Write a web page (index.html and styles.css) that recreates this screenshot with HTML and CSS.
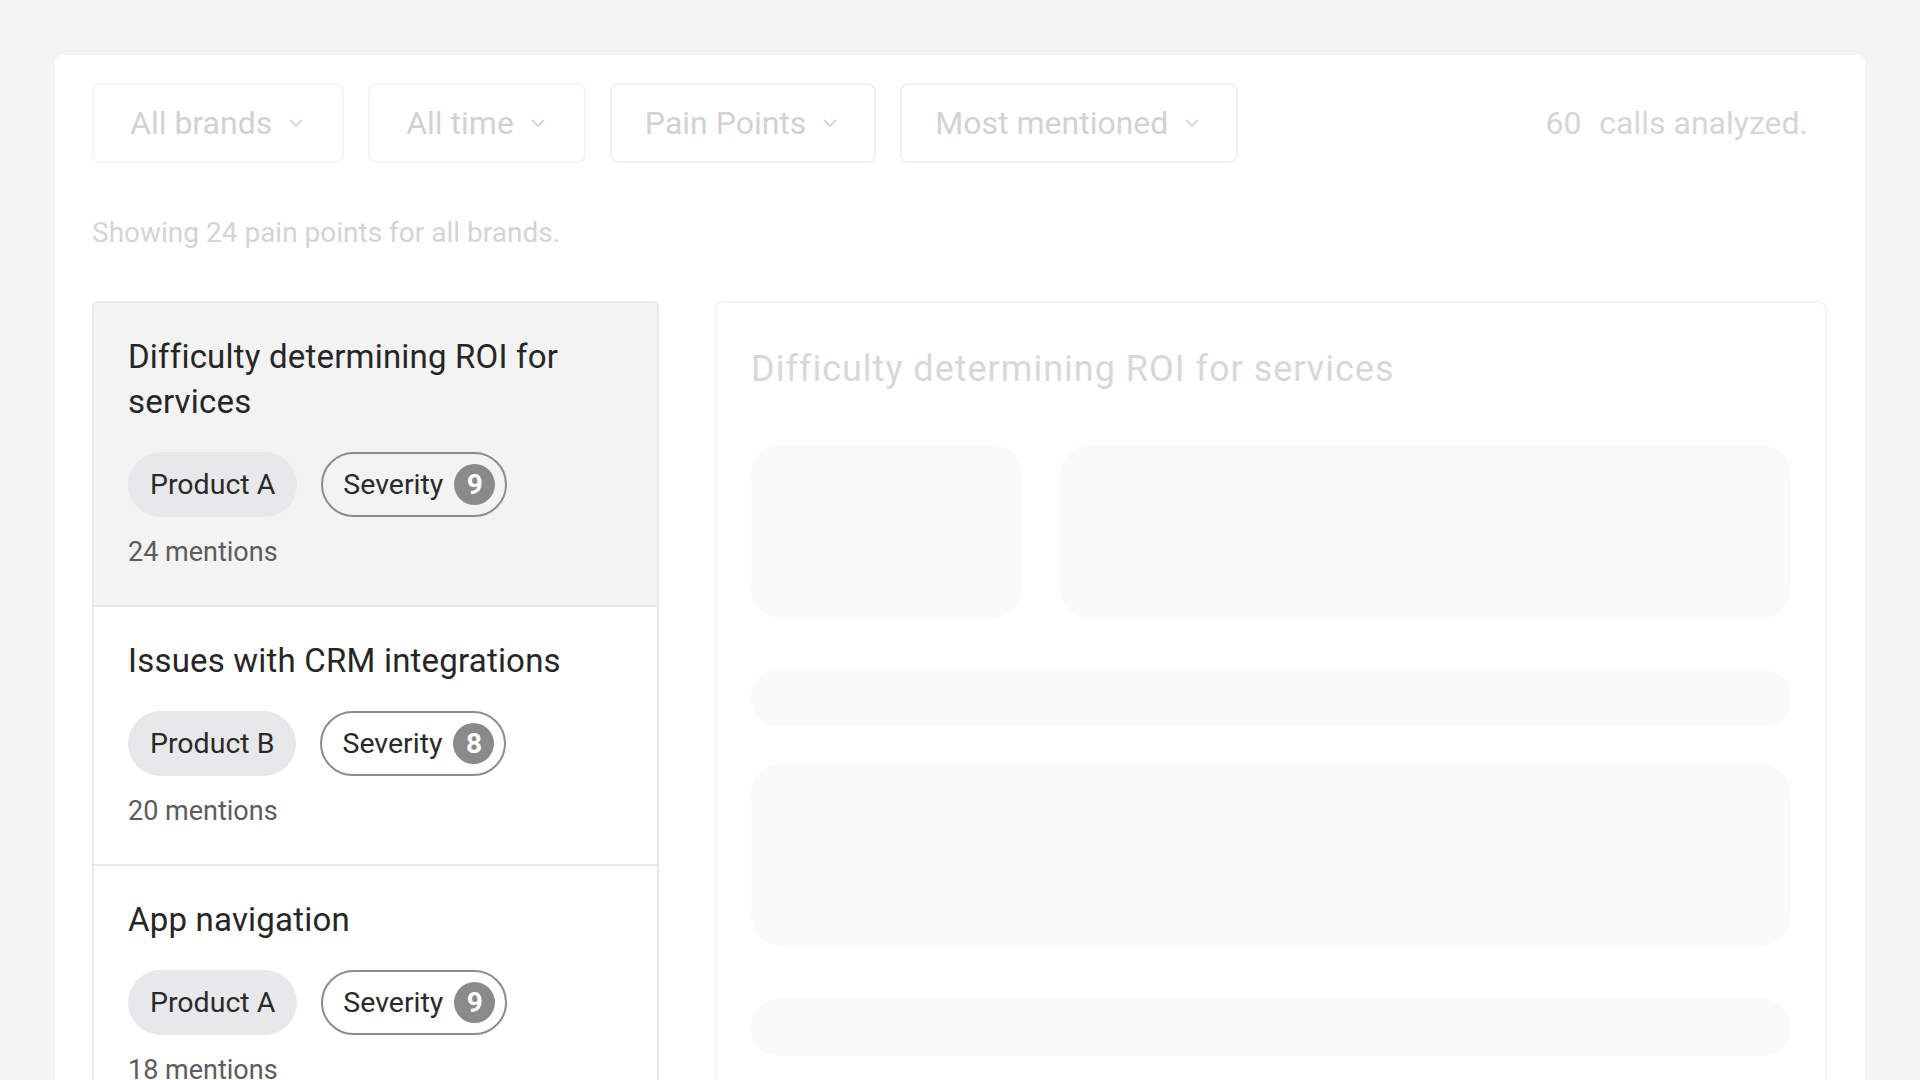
FILE: index.html
```html
<!DOCTYPE html>
<html lang="en">
<head>
    <meta charset="UTF-8">
    <meta name="viewport" content="width=device-width, initial-scale=1.0">
    <title>Pain Points</title>
    <link rel="stylesheet" href="styles.css">
</head>
<body>

<div class="card">
    <div class="toolbar">
        <div class="filter">
            <span>All brands</span>
            <svg class="chevron" viewBox="0 0 16 10"><path d="M2 2 L8 8 L14 2"/></svg>
        </div>
        <div class="filter">
            <span>All time</span>
            <svg class="chevron" viewBox="0 0 16 10"><path d="M2 2 L8 8 L14 2"/></svg>
        </div>
        <div class="filter filter-active">
            <span>Pain Points</span>
            <svg class="chevron" viewBox="0 0 16 10"><path d="M2 2 L8 8 L14 2"/></svg>
        </div>
        <div class="filter filter-active">
            <span>Most mentioned</span>
            <svg class="chevron" viewBox="0 0 16 10"><path d="M2 2 L8 8 L14 2"/></svg>
        </div>
        <div class="count"><span class="count-num">60</span> calls analyzed.</div>
    </div>

    <p class="summary">Showing 24 pain points for all brands.</p>

    <div class="content">
        <div class="list">
            <div class="item selected">
                <h3>Difficulty determining ROI for services</h3>
                <div class="chips">
                    <span class="chip">Product A</span>
                    <span class="chip chip-outline">Severity <span class="badge">9</span></span>
                </div>
                <div class="mentions">24 mentions</div>
            </div>
            <div class="item">
                <h3>Issues with CRM integrations</h3>
                <div class="chips">
                    <span class="chip">Product B</span>
                    <span class="chip chip-outline">Severity <span class="badge">8</span></span>
                </div>
                <div class="mentions">20 mentions</div>
            </div>
            <div class="item">
                <h3>App navigation</h3>
                <div class="chips">
                    <span class="chip">Product A</span>
                    <span class="chip chip-outline">Severity <span class="badge">9</span></span>
                </div>
                <div class="mentions">18 mentions</div>
            </div>
        </div>

        <div class="detail">
            <h2>Difficulty determining ROI for services</h2>
            <div class="skeleton-row">
                <div class="skeleton"></div>
                <div class="skeleton"></div>
            </div>
            <div class="skeleton bar"></div>
            <div class="skeleton block"></div>
            <div class="skeleton bar last"></div>
        </div>
    </div>
</div>

</body>
</html>
```
FILE: styles.css
```css
body {
    font-family: Roboto, "Liberation Sans", sans-serif;
    background-color: #f3f3f3;
    margin: 0;
    padding: 55px 55px 0;
    height: 100vh;
    box-sizing: border-box;
    overflow: hidden;
}

.card {
    background-color: white;
    border-radius: 8px;
    padding: 28px 38px 0 37px;
    height: 1100px;
}

.toolbar {
    display: flex;
    align-items: center;
    gap: 24px;
}

.filter {
    display: flex;
    align-items: center;
    gap: 16px;
    height: 80px;
    box-sizing: border-box;
    padding: 0 38px 0 36px;
    border: 2px solid #f6f6f6;
    border-radius: 8px;
    font-size: 32px;
    color: #d2d2d2;
}

.filter-active {
    border-color: #f0f0f0;
    padding: 0 36px 0 33px;
}

.filter-active:last-of-type {
    padding: 0 38px 0 35px;
}

.chevron {
    width: 16px;
    height: 10px;
    fill: none;
    stroke: #d4d4d4;
    stroke-width: 1.8;
}

.count {
    margin-left: auto;
    margin-right: 19px;
    font-size: 32px;
    color: #d6d6d6;
}

.count-num {
    margin-right: 10px;
}

.summary {
    margin: 51px 0 0;
    font-size: 28px;
    line-height: 38px;
    color: #d4d4d4;
}

.content {
    display: grid;
    grid-template-columns: 567px 1fr;
    gap: 56px;
    margin-top: 49px;
}

.list {
    border: 2px solid #e8e8e8;
    border-bottom: none;
    border-radius: 6px 6px 0 0;
    overflow: hidden;
}

.item {
    padding: 31px 28px 35px 34px;
    border-bottom: 2px solid #e8e8e8;
}

.item.selected {
    background-color: #f3f3f3;
}

.item h3 {
    margin: 0;
    font-size: 33px;
    font-weight: 400;
    line-height: 45px;
    letter-spacing: 0.2px;
    color: #262626;
}

.chips {
    display: flex;
    gap: 24px;
    margin-top: 28px;
}

.chip {
    display: inline-flex;
    align-items: center;
    height: 65px;
    box-sizing: border-box;
    padding: 0 22px;
    border-radius: 33px;
    background-color: #e8e8ea;
    font-size: 28.5px;
    color: #2a2a2a;
}

.chip-outline {
    background-color: transparent;
    border: 2px solid #8c8c8c;
    padding: 0 10px 0 20px;
    gap: 11px;
}

.badge {
    display: inline-flex;
    align-items: center;
    justify-content: center;
    width: 41px;
    height: 41px;
    border-radius: 50%;
    background-color: #8a8a8a;
    color: white;
    font-size: 28px;
    font-weight: 700;
}

.mentions {
    margin-top: 17px;
    font-size: 27px;
    line-height: 36px;
    color: #5c5c5c;
}

.detail {
    border: 2px solid #f5f5f5;
    border-bottom: none;
    border-radius: 8px 8px 0 0;
    padding: 44px 34px 0;
}

.detail h2 {
    margin: 0;
    font-size: 36px;
    font-weight: 400;
    line-height: 44px;
    letter-spacing: 1px;
    color: #d8d8d8;
}

.skeleton-row {
    display: grid;
    grid-template-columns: 271px 1fr;
    gap: 38px;
    margin-top: 54px;
    height: 173px;
}

.skeleton {
    background-color: #fafafa;
    border-radius: 30px;
}

.bar {
    height: 57px;
    margin-top: 52px;
    border-radius: 28px;
}

.block {
    height: 183px;
    margin-top: 36px;
    border-radius: 32px;
}

.bar.last {
    margin-top: 53px;
}
```
